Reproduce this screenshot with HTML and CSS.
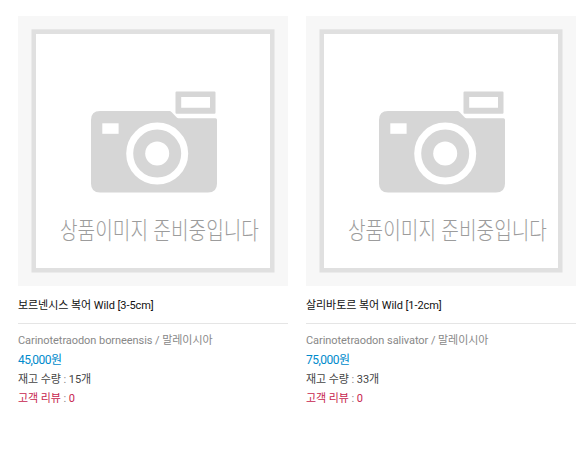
FILE: index.html
```
<!DOCTYPE html>
<html lang="ko">
<head>
<meta charset="utf-8">
<title>상품 목록</title>
<link rel="stylesheet" href="styles.css">
</head>
<body>
<svg class="defs" width="0" height="0">
  <symbol id="noimage" viewBox="0 0 270 270">
    <rect width="270" height="270" fill="#f7f7f7"/>
    <rect x="13.5" y="13.3" width="243" height="243.2" fill="#e0e0e0"/>
    <rect x="18" y="18" width="234" height="234" fill="#fff"/>
    <path fill="#d6d6d6" d="M82 95h69.500q1 0 2 1l5 5.300q1 1 2 1h37q1.500 0 1.500 1.500v63.700q0 9-9 9h-108q-9 0-9-9v-63.500q0-9 9-9z"/>
    <path fill="#d6d6d6" fill-rule="evenodd" d="M158.500 75.500h38q1 0 1 1v20.300q0 1-1 1h-38q-1 0-1-1v-20.300q0-1 1-1zM163.200 81v10.800h28.800v-10.800z"/>
    <rect x="84.300" y="107.300" width="16.300" height="10.500" fill="#fff"/>
    <circle cx="139.200" cy="137.600" r="27.500" fill="none" stroke="#fff" stroke-width="7"/>
    <circle cx="139.200" cy="137.600" r="12" fill="#fff"/>
  </symbol>
</svg>
<ul class="goods">
  <li>
    <a href="#" class="thumb"><svg width="270" height="270"><use href="#noimage"/></svg><span>상품이미지 준비중입니다</span></a>
    <p class="name"><a href="#">보르넨시스 복어 Wild [3-5cm]</a></p>
    <ul class="spec">
      <li class="summary">Carinotetraodon borneensis / 말레이시아</li>
      <li class="price">45,000원</li>
      <li class="stock">재고 수량 <i>:</i> 15개</li>
      <li class="review">고객 리뷰 <i>:</i> 0</li>
    </ul>
  </li>
  <li>
    <a href="#" class="thumb"><svg width="270" height="270"><use href="#noimage"/></svg><span>상품이미지 준비중입니다</span></a>
    <p class="name"><a href="#">살리바토르 복어 Wild [1-2cm]</a></p>
    <ul class="spec">
      <li class="summary">Carinotetraodon salivator / 말레이시아</li>
      <li class="price">75,000원</li>
      <li class="stock">재고 수량 <i>:</i> 33개</li>
      <li class="review">고객 리뷰 <i>:</i> 0</li>
    </ul>
  </li>
</ul>
</body>
</html>
```
FILE: styles.css
```
* {
  margin: 0;
  padding: 0;
  }
body {
  background: #fff;
  color: #444;
  font: 11px/19px Roboto, "Noto Sans CJK KR", sans-serif;
  letter-spacing: -0.06px;
  }
ul {
  list-style: none;
  }
a {
  color: inherit;
  text-decoration: none;
  }
.defs {
  display: block;
  }
.goods {
  display: grid;
  grid-template-columns: 270px 270px;
  gap: 18px;
  padding: 16px 0 0 18px;
  }
.thumb {
  display: block;
  position: relative;
  }
.thumb svg {
  display: block;
  }
/* caption lies over the picture */
.thumb span {
  position: absolute;
  left: 42px;
  top: 195px;
  color: #9c9c9c;
  font: 300 24px/36px "Noto Sans CJK KR", sans-serif;
  letter-spacing: 0;
  white-space: nowrap;
  transform: scaleX(.797);
  transform-origin: 0 0;
  }
.name {
  border-bottom: 1px solid #e5e5e5;
  color: #111;
  padding: 10px 0 8px;
  }
.spec {
  padding-top: 7px;
  }
.spec i {
  color: #888;
  font-style: normal;
  }
.spec .summary {
  color: #888;
  line-height: 20px;
  }
.spec .price {
  color: #008bcc;
  font-size: 12px;
  letter-spacing: -0.5px;
  }
.spec .review {
  color: #c7254e;
  }
```
